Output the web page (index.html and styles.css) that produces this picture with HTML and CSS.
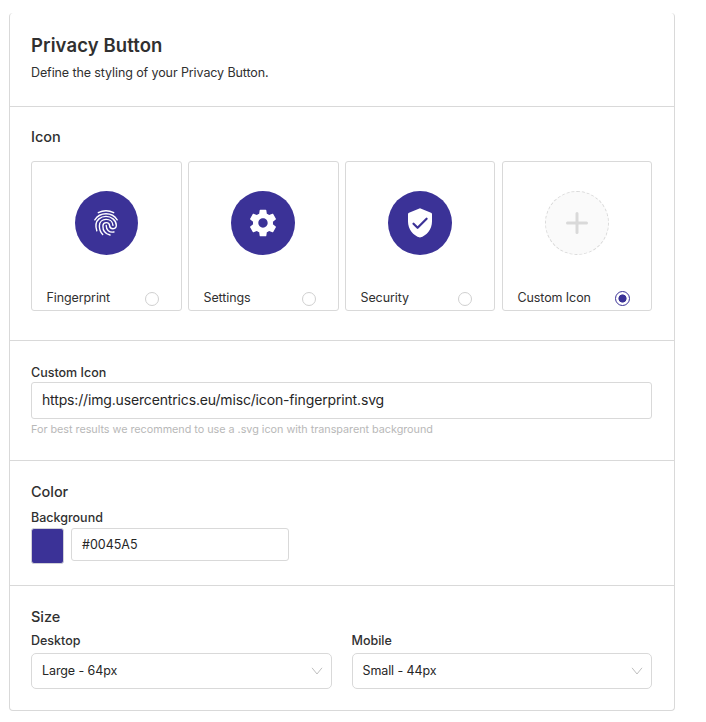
FILE: index.html
```html
<!DOCTYPE html>
<html lang="en">
<head>
<meta charset="utf-8">
<title>Privacy Button</title>
<link rel="stylesheet" href="styles.css">
</head>
<body>
<main class="panel">
  <header class="section section-head">
    <h1 class="title">Privacy Button</h1>
    <p class="intro">Define the styling of your Privacy Button.</p>
  </header>

  <section class="section section-icon">
    <h2 class="heading">Icon</h2>
    <div class="cards">
      <label class="card">
        <span class="disc disc-narrow">
          <svg class="finger" viewBox="0 0 24 26">
            <path d="M4.3 2.7Q12 -1.1 19.7 2.7"/>
            <path d="M.8 9.8C6 1.8 18 1.8 23.2 9.8"/>
            <path d="M2.8 20.8C1.2 15.8 1.7 11.7 5 8.9C9 5.5 15 5.5 19 8.9C21.3 10.8 22.3 13.1 22.3 15.3C22.3 19.7 15.9 19.9 15.6 15.6C15.3 11.5 9 11.6 8.9 15.9C8.8 20.3 11.6 23.9 16 25"/>
            <path d="M8.7 24.6C6 21.8 5.3 18.9 5.4 15.8C5.6 7.5 18.3 7.2 19 15.4"/>
            <path d="M12.2 15.5C12.2 20 15.2 22.9 20 22"/>
          </svg>
        </span>
        <span class="card-foot"><span>Fingerprint</span><i class="radio"></i></span>
      </label>
      <label class="card">
        <span class="disc disc-gear">
          <svg class="glyph" viewBox="0 0 24 24"><path d="M19.43 12.98c.04-.32.07-.64.07-.98s-.03-.66-.07-.98l2.11-1.65c.19-.15.24-.42.12-.64l-2-3.46c-.12-.22-.39-.3-.61-.22l-2.49 1c-.52-.4-1.08-.73-1.69-.98l-.38-2.65C14.46 2.18 14.25 2 14 2h-4c-.25 0-.46.18-.49.42l-.38 2.65c-.61.25-1.17.59-1.69.98l-2.49-1c-.23-.09-.49 0-.61.22l-2 3.46c-.13.22-.07.49.12.64l2.11 1.65c-.04.32-.07.65-.07.98s.03.66.07.98l-2.11 1.65c-.19.15-.24.42-.12.64l2 3.46c.12.22.39.3.61.22l2.49-1c.52.4 1.08.73 1.69.98l.38 2.65c.03.24.24.42.49.42h4c.25 0 .46-.18.49-.42l.38-2.65c.61-.25 1.17-.59 1.69-.98l2.49 1c.23.09.49 0 .61-.22l2-3.46c.12-.22.07-.49-.12-.64l-2.11-1.65zM12 15.5c-1.93 0-3.5-1.57-3.5-3.5s1.57-3.5 3.5-3.5 3.5 1.57 3.5 3.5-1.57 3.5-3.5 3.5z"/></svg>
        </span>
        <span class="card-foot"><span>Settings</span><i class="radio"></i></span>
      </label>
      <label class="card">
        <span class="disc">
          <svg class="shield" viewBox="0 0 24 30"><path class="shield-body" d="M12 .3L23 4.8Q24 5.2 24 6.2V13.5C24 21 18.8 27.7 12 29.6C5.2 27.7 0 21 0 13.5V6.2Q0 5.2 1 4.8Z"/><path class="shield-check" d="M5.5 15.7L9.6 19.8L18.6 10.7"/></svg>
        </span>
        <span class="card-foot"><span>Security</span><i class="radio"></i></span>
      </label>
      <label class="card">
        <span class="disc disc-empty">
          <svg class="plus" viewBox="0 0 22 22"><path d="M11 1.5V20.5M1.5 11H20.5"/></svg>
        </span>
        <span class="card-foot"><span>Custom Icon</span><i class="radio radio-on"></i></span>
      </label>
    </div>
  </section>

  <section class="section section-custom">
    <label class="label">Custom Icon</label>
    <div class="field field-url">https://img.usercentrics.eu/misc/icon-fingerprint.svg</div>
    <p class="hint">For best results we recommend to use a .svg icon with transparent background</p>
  </section>

  <section class="section section-color">
    <h2 class="heading">Color</h2>
    <label class="label">Background</label>
    <div class="color-row">
      <span class="swatch"></span>
      <div class="field field-color">#0045A5</div>
    </div>
  </section>

  <section class="section section-size">
    <h2 class="heading">Size</h2>
    <div class="sizes">
      <div>
        <label class="label">Desktop</label>
        <div class="field select">Large - 64px<svg class="chevron" viewBox="0 0 12 8"><path d="M1 .8L6 7L11 .8"/></svg></div>
      </div>
      <div>
        <label class="label">Mobile</label>
        <div class="field select">Small - 44px<svg class="chevron" viewBox="0 0 12 8"><path d="M1 .8L6 7L11 .8"/></svg></div>
      </div>
    </div>
  </section>
</main>
</body>
</html>
```
FILE: styles.css
```css
* { box-sizing: border-box; }

body {
  margin: 0;
  padding: 13px 0 0 9px;
  background: #fff;
  color: #303030;
  font-family: Inter, "Liberation Sans", sans-serif;
  font-size: 13px;
}

h1, h2, p { margin: 0; }

.panel {
  width: 666px;
  border: 1px solid #d9d9d9;
  border-top: 0;
  border-radius: 4px;
}

.section {
  padding: 0 22px 0 21px;
  border-bottom: 1px solid #d9d9d9;
}
.section:last-child { border-bottom: 0; }

.section-head { height: 94px; padding-top: 20px; }
.section-icon { height: 234px; padding-top: 20px; }
.section-custom { height: 120px; padding-top: 22px; }
.section-color { height: 125px; padding-top: 21px; }
.section-size { height: 124px; padding-top: 21px; }

.title {
  font-size: 18.5px;
  font-weight: 600;
  line-height: 24px;
  letter-spacing: 0.1px;
}
.intro { margin-top: 6px; line-height: 20px; font-size: 12.5px; letter-spacing: -0.1px; }

.heading { font-size: 14.5px; font-weight: 500; line-height: 20px; letter-spacing: -0.05px; }
.label { display: block; font-size: 12.5px; font-weight: 500; line-height: 20px; }

.cards {
  display: grid;
  grid-template-columns: 151px 151px 150px 150px;
  column-gap: 6px;
  margin-top: 14px;
}
.card {
  display: flex;
  flex-direction: column;
  justify-content: space-between;
  align-items: center;
  height: 150px;
  padding-top: 29px;
  border: 1px solid #d9d9d9;
  border-radius: 3px;
}
.card:last-child { margin: 0 -1px 0 1px; }
.disc {
  display: flex;
  align-items: center;
  justify-content: center;
  width: 64px;
  height: 64px;
  border-radius: 50%;
  background: #3b3297;
}
.disc-narrow { width: 63px; padding-right: 1px; }
.disc-gear { margin-right: 1px; }
.disc-empty { background: #fafafa; border: 1px dashed #d9d9d9; }

.finger { width: 24px; height: 26px; fill: none; stroke: #fff; stroke-width: 1.4; stroke-linecap: round; overflow: visible; }
.glyph { width: 32px; height: 32px; fill: #fff; }
.shield { width: 24px; height: 30px; }
.shield-body { fill: #fff; }
.shield-check { fill: none; stroke: #3b3297; stroke-width: 2.2; stroke-linecap: round; stroke-linejoin: round; }
.plus { width: 22px; height: 22px; fill: none; stroke: #d9d9d9; stroke-width: 3; stroke-linecap: round; }

.card-foot {
  display: flex;
  justify-content: space-between;
  align-items: center;
  align-self: stretch;
  height: 24px;
  padding: 0 22px 0 14.5px;
  font-size: 12.5px;
  letter-spacing: -0.1px;
}
.card-foot span { padding-bottom: 2px; }
.radio {
  width: 14px;
  height: 14px;
  margin-top: 1px;
  border: 1px solid #d0d0d0;
  border-radius: 50%;
}
.radio-on {
  width: 15px;
  height: 15px;
  margin-right: -1px;
  border-color: #3b3297;
  background: radial-gradient(circle, #3b3297 3.7px, #fff 4.4px);
}

.field {
  display: flex;
  align-items: center;
  border: 1px solid #d9d9d9;
  border-radius: 3px;
  padding: 0 10px 1px;
  font-size: 12.5px;
  letter-spacing: -0.1px;
  color: #262626;
}
.field-url { height: 37px; margin-top: -1px; padding-bottom: 2px; font-size: 14px; letter-spacing: -0.155px; }
.hint { margin-top: 1px; font-size: 10.8px; line-height: 20px; letter-spacing: -0.02px; color: #b8b8b8; }

.section-color .label { margin-top: 6px; }
.color-row { display: flex; gap: 7px; }
.swatch {
  width: 33px;
  height: 36px;
  border: 1px solid #d0d0d8;
  border-radius: 3px;
  background: #3b3297;
}
.field-color { width: 218px; height: 33px; letter-spacing: 0; }

.sizes { display: grid; grid-template-columns: 1fr 1fr; gap: 20px; margin-top: 4px; }
.select { justify-content: space-between; height: 36px; margin-top: 2px; padding-right: 8px; border-radius: 5px; }
.chevron { width: 12px; height: 8px; fill: none; stroke: #bfbfbf; stroke-width: 1; }
```
